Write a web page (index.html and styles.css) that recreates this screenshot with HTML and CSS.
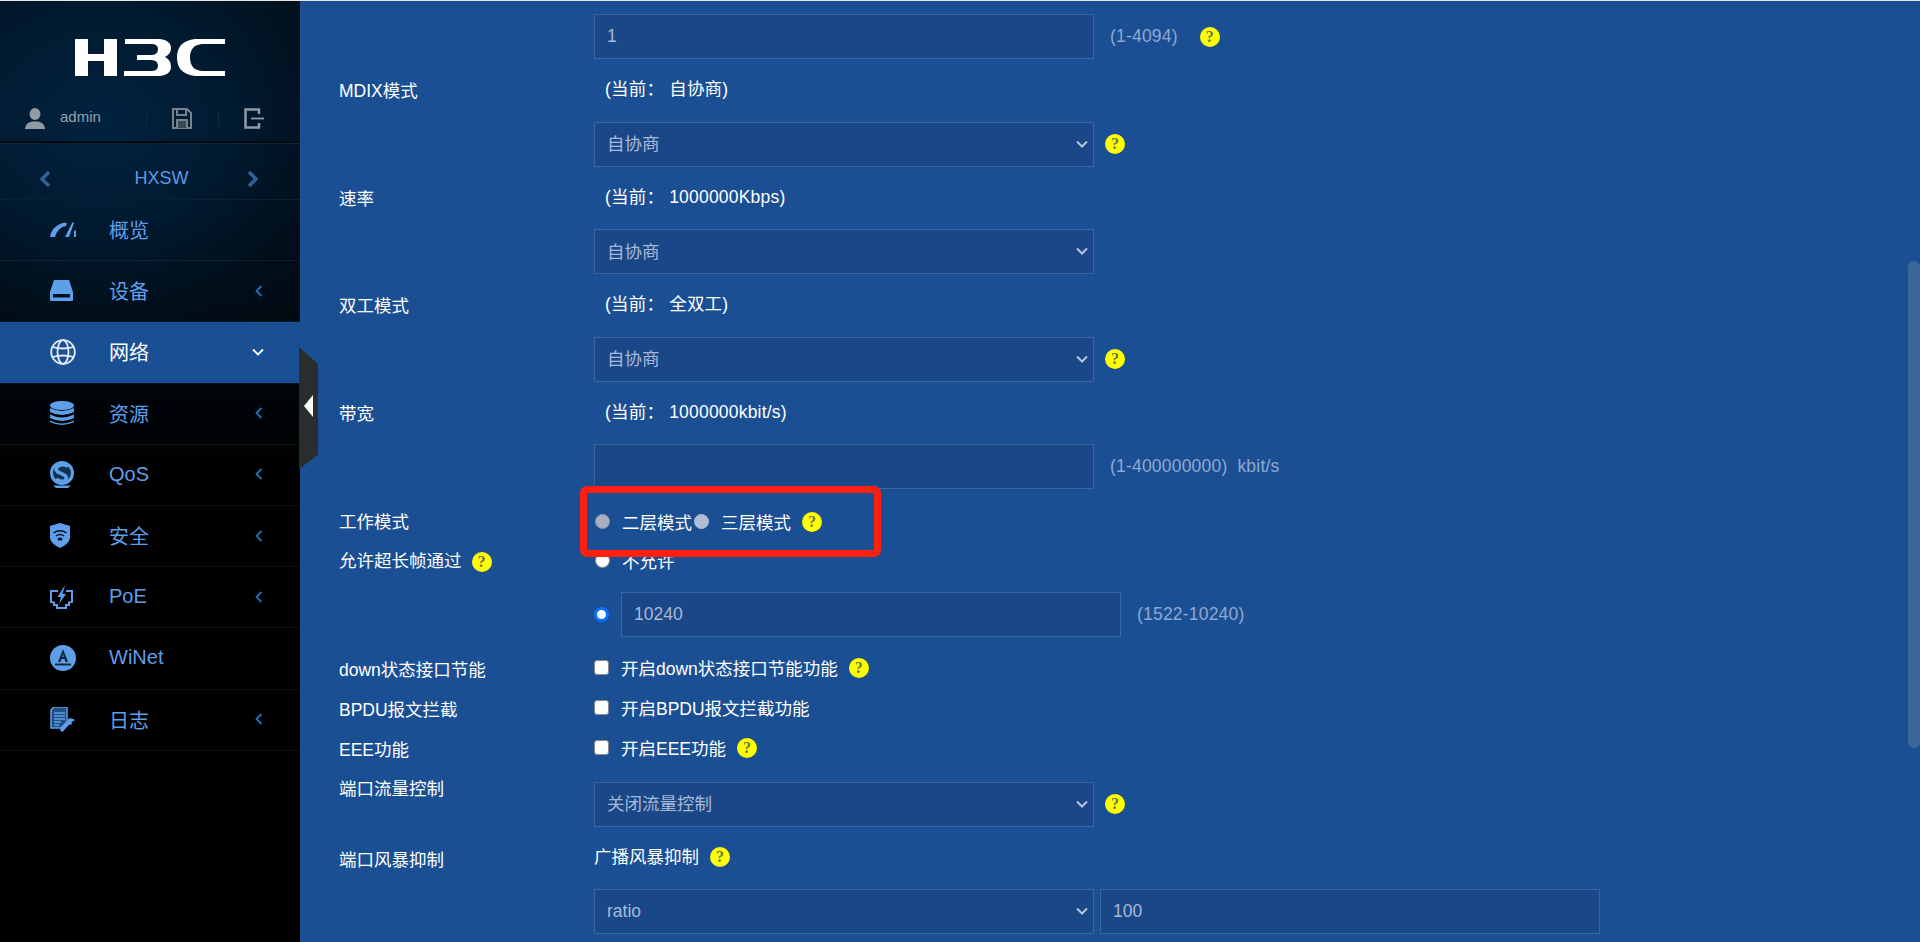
FILE: index.html
```html
<!DOCTYPE html>
<html lang="zh-CN">
<head>
<meta charset="utf-8">
<title>H3C</title>
<link rel="stylesheet" href="styles.css">
</head>
<body>
<div class="topline"></div>
<div class="shell">
  <aside class="sidebar">
    <div class="logo-wrap">
      <svg class="logo" width="150" height="37" viewBox="0 0 150 37" fill="#fff">
        <path d="M0 0H13V15H29V0H42V37H29V22H13V37H0Z"/>
        <path d="M50 0H84Q96 1 96 9.500Q96 15 90 18Q96 21 96 27.500Q96 36 84 37H49V32H76Q83 32 83 27Q83 21 76 21H62V16H76Q83 16 83 10Q83 5 76 5H50Z"/>
        <path d="M150 0H120Q102 2 102 18.500Q102 35 120 37H150V32H127Q115 31 115 18.500Q115 6 127 5H150Z"/>
      </svg>
    </div>
    <div class="userbar">
      <svg class="ub-user" width="20" height="21" viewBox="0 0 20 21" fill="#8f9ba3"><ellipse cx="10" cy="6" rx="5.500" ry="6"/><path d="M0 21Q0 15 7 13.500H13Q20 15 20 21Z"/></svg>
      <span class="ub-name">admin</span>
      <i class="ub-sep"></i>
      <svg class="ub-save" width="20" height="21" viewBox="0 0 20 21" fill="none" stroke="#75838c" stroke-width="2"><path d="M1 1H15L19 5V20H1Z"/><path d="M5 1V7H14V1" /><path d="M5 20V12H15V20" fill="#3a4a55"/></svg>
      <i class="ub-sep"></i>
      <svg class="ub-exit" width="20" height="21" viewBox="0 0 20 21" fill="none" stroke="#8f9ba3" stroke-width="2.500"><path d="M15 6V1.500H1.500V19.500H15V15"/><path d="M7 10.500H20" stroke-width="1.800"/></svg>
    </div>
    <div class="devicebar">
      <svg width="12" height="18" viewBox="0 0 12 18" fill="none" stroke="#2f6199" stroke-width="3.500"><path d="M10 2L3 9L10 16"/></svg>
      <span class="device-name">HXSW</span>
      <svg width="12" height="18" viewBox="0 0 12 18" fill="none" stroke="#2f6199" stroke-width="3.500"><path d="M2 2L9 9L2 16"/></svg>
    </div>
    <ul class="menu">
      <li class="item">
        <span class="ico"><svg width="26" height="17" viewBox="0 0 26 17" fill="#5e9fea"><path d="M0 16Q1 7 10 3Q14 1 17 2L16 5Q8 6 5 16Z"/><path d="M15 16L22.500 1L24 2L19 16Z"/><path d="M24 10L26 9V16H24Z"/></svg></span>
        <span class="label">概览</span>
      </li>
      <li class="item">
        <span class="ico"><svg width="23" height="21" viewBox="0 0 23 21" fill="#5e9fea"><path d="M4 0H19L23 12V20Q23 21 22 21H1Q0 21 0 20V12Z"/><rect x="3" y="14" width="17" height="3.500" fill="#01111f"/></svg></span>
        <span class="label">设备</span>
        <svg class="chev" width="8" height="12" viewBox="0 0 8 12" fill="none" stroke="#1f72bd" stroke-width="1.800"><path d="M6.500 1L1.500 6L6.500 11"/></svg>
      </li>
      <li class="item active">
        <span class="ico"><svg width="26" height="26" viewBox="0 0 26 26" fill="none" stroke="#e6edf6" stroke-width="1.800"><circle cx="13" cy="13" r="11.800"/><ellipse cx="13" cy="13" rx="5.500" ry="11.800"/><path d="M2.500 8Q13 11 23.500 8M2.500 18Q13 15 23.500 18"/></svg></span>
        <span class="label">网络</span>
        <svg class="chev down" width="12" height="8" viewBox="0 0 12 8" fill="none" stroke="#fff" stroke-width="1.800"><path d="M1 1.500L6 6.500L11 1.500"/></svg>
      </li>
      <li class="item">
        <span class="ico"><svg width="24" height="25" viewBox="0 0 24 25" fill="#5e9fea"><ellipse cx="12" cy="4.500" rx="12" ry="4.500"/><path d="M0 7Q12 13 24 7V11Q12 17 0 11Z"/><path d="M0 13.500Q12 19.500 24 13.500V17Q12 23 0 17Z"/><path d="M0 19.500Q12 25.500 24 19.500V21Q12 27 0 21Z"/></svg></span>
        <span class="label">资源</span>
        <svg class="chev" width="8" height="12" viewBox="0 0 8 12" fill="none" stroke="#1f72bd" stroke-width="1.800"><path d="M6.500 1L1.500 6L6.500 11"/></svg>
      </li>
      <li class="item">
        <span class="ico"><svg width="24" height="27" viewBox="0 0 24 27"><circle cx="12" cy="12" r="10.500" fill="#12304f" stroke="#5e9fea" stroke-width="3"/><path d="M18 5Q11 2 7 6Q4.500 10 10 12L15 14.500Q18 17 14.500 20Q9 21 6 18" fill="none" stroke="#5e9fea" stroke-width="3.600"/><path d="M3 24.500H21L18 27H6Z" fill="#5e9fea"/></svg></span>
        <span class="label">QoS</span>
        <svg class="chev" width="8" height="12" viewBox="0 0 8 12" fill="none" stroke="#1f72bd" stroke-width="1.800"><path d="M6.500 1L1.500 6L6.500 11"/></svg>
      </li>
      <li class="item">
        <span class="ico"><svg width="20" height="25" viewBox="0 0 20 25"><path d="M10 0L20 3V15Q19 21 10 25Q1 21 0 15V3Z" fill="#5e9fea"/><g fill="none" stroke="#02101c" stroke-width="1.500"><path d="M3.500 10Q10 5.500 16.500 10"/><path d="M6 13Q10 10 14 13"/></g><ellipse cx="10" cy="16" rx="2.500" ry="1.500" fill="#02101c"/></svg></span>
        <span class="label">安全</span>
        <svg class="chev" width="8" height="12" viewBox="0 0 8 12" fill="none" stroke="#1f72bd" stroke-width="1.800"><path d="M6.500 1L1.500 6L6.500 11"/></svg>
      </li>
      <li class="item">
        <span class="ico"><svg width="23" height="24" viewBox="0 0 23 24"><path d="M8 6H1V17L4 17.500V20H7V23H16V20H19V17.500L22 17V6H16" fill="none" stroke="#5e9fea" stroke-width="2"/><path d="M15 0L7.500 12H11L9 19L16 9H12.500Z" fill="#5e9fea"/></svg></span>
        <span class="label">PoE</span>
        <svg class="chev" width="8" height="12" viewBox="0 0 8 12" fill="none" stroke="#1f72bd" stroke-width="1.800"><path d="M6.500 1L1.500 6L6.500 11"/></svg>
      </li>
      <li class="item">
        <span class="ico"><svg width="26" height="26" viewBox="0 0 26 26"><circle cx="13" cy="13" r="13" fill="#5e9fea"/><path d="M13 4L8 17H10.500L11.500 14H14.500L15.500 17H18ZM12.200 12L13 9L13.800 12Z" fill="#12263c" fill-rule="evenodd"/><rect x="5" y="18.500" width="16" height="2" fill="#12263c"/></svg></span>
        <span class="label">WiNet</span>
      </li>
      <li class="item">
        <span class="ico"><svg width="25" height="25" viewBox="0 0 25 25"><path d="M4 0H17V15L11 21H1V3Z" fill="#24507f" stroke="#5e9fea" stroke-width="1.500"/><g stroke="#5e9fea" stroke-width="1.500"><path d="M4 6H15M4 9H15M4 12H15M4 15H11M4 18H9"/></g><path d="M11 24L19 15" stroke="#5e9fea" stroke-width="3.500"/><path d="M18 12Q21 10 25 13L21.500 15L22 17L20 18L17.500 16Z" fill="#5e9fea"/></svg></span>
        <span class="label">日志</span>
        <svg class="chev" width="8" height="12" viewBox="0 0 8 12" fill="none" stroke="#1f72bd" stroke-width="1.800"><path d="M6.500 1L1.500 6L6.500 11"/></svg>
      </li>
    </ul>
  </aside>

  <div class="collapse">
    <svg width="20" height="122" viewBox="0 0 20 122"><path d="M0 0L19 17V108L0 122Z" fill="#2a2d2e"/><path d="M14 48V70L5 59Z" fill="#fff"/></svg>
  </div>

  <main class="main">
    <div class="row first">
      <div class="col-label"></div>
      <div class="col-ctrl line-field">
        <input class="field" type="text" value="1">
        <span class="range">(1-4094)</span>
        <span class="help wide">?</span>
      </div>
    </div>

    <div class="row"><div class="col-label">MDIX模式</div><div class="col-ctrl current">(当前：&nbsp;自协商)</div></div>
    <div class="row tight"><div class="col-label"></div><div class="col-ctrl line-field">
      <span class="selwrap"><select class="field"><option>自协商</option></select><svg class="arrow" width="12" height="8" viewBox="0 0 12 8" fill="none" stroke="#b6c4dc" stroke-width="2"><path d="M1 1.500L6 6.500L11 1.500"/></svg></span>
      <span class="help">?</span>
    </div></div>

    <div class="row"><div class="col-label">速率</div><div class="col-ctrl current">(当前：&nbsp;1000000Kbps)</div></div>
    <div class="row tight"><div class="col-label"></div><div class="col-ctrl line-field">
      <span class="selwrap"><select class="field"><option>自协商</option></select><svg class="arrow" width="12" height="8" viewBox="0 0 12 8" fill="none" stroke="#b6c4dc" stroke-width="2"><path d="M1 1.500L6 6.500L11 1.500"/></svg></span>
    </div></div>

    <div class="row"><div class="col-label">双工模式</div><div class="col-ctrl current">(当前：&nbsp;全双工)</div></div>
    <div class="row tight"><div class="col-label"></div><div class="col-ctrl line-field">
      <span class="selwrap"><select class="field"><option>自协商</option></select><svg class="arrow" width="12" height="8" viewBox="0 0 12 8" fill="none" stroke="#b6c4dc" stroke-width="2"><path d="M1 1.500L6 6.500L11 1.500"/></svg></span>
      <span class="help">?</span>
    </div></div>

    <div class="row"><div class="col-label">带宽</div><div class="col-ctrl current">(当前：&nbsp;1000000kbit/s)</div></div>
    <div class="row tight"><div class="col-label"></div><div class="col-ctrl line-field">
      <input class="field" type="text">
      <span class="range">(1-400000000)</span><span class="range unit">kbit/s</span>
    </div></div>

    <div class="row mode">
      <div class="col-label">工作模式</div>
      <div class="col-ctrl choices">
        <label class="choice"><input class="rd rd-off" type="radio" disabled>二层模式</label>
        <label class="choice"><input class="rd rd-off2" type="radio" disabled>三层模式</label>
        <span class="help">?</span>
      </div>
    </div>

    <div class="row jumbo">
      <div class="col-label with-help">允许超长帧通过<span class="help">?</span></div>
      <div class="col-ctrl choices"><label class="choice"><input class="rd" type="radio">不允许</label></div>
    </div>
    <div class="row jumbo-input"><div class="col-label"></div><div class="col-ctrl line-field">
      <input class="rd rd-on" type="radio" checked>
      <input class="field" type="text" value="10240">
      <span class="range">(1522-10240)</span>
    </div></div>

    <div class="row chk c1"><div class="col-label">down状态接口节能</div><div class="col-ctrl choices"><label class="choice"><input class="cb" type="checkbox">开启down状态接口节能功能</label><span class="help">?</span></div></div>
    <div class="row chk c2"><div class="col-label">BPDU报文拦截</div><div class="col-ctrl choices"><label class="choice"><input class="cb" type="checkbox">开启BPDU报文拦截功能</label></div></div>
    <div class="row chk c3"><div class="col-label">EEE功能</div><div class="col-ctrl choices"><label class="choice"><input class="cb" type="checkbox">开启EEE功能</label><span class="help">?</span></div></div>

    <div class="row flow"><div class="col-label">端口流量控制</div><div class="col-ctrl line-field flow-ctrl">
      <span class="selwrap"><select class="field"><option>关闭流量控制</option></select><svg class="arrow" width="12" height="8" viewBox="0 0 12 8" fill="none" stroke="#b6c4dc" stroke-width="2"><path d="M1 1.500L6 6.500L11 1.500"/></svg></span>
      <span class="help">?</span>
    </div></div>

    <div class="row storm"><div class="col-label">端口风暴抑制</div><div class="col-ctrl storm-title">广播风暴抑制<span class="help">?</span></div></div>
    <div class="row storm-fields"><div class="col-label"></div><div class="col-ctrl line-field pair">
      <span class="selwrap"><select class="field"><option>ratio</option></select><svg class="arrow" width="12" height="8" viewBox="0 0 12 8" fill="none" stroke="#b6c4dc" stroke-width="2"><path d="M1 1.500L6 6.500L11 1.500"/></svg></span>
      <input class="field" type="text" value="100">
    </div></div>

    <div class="annot"></div>
    <div class="thumb"></div>
  </main>
</div>
</body>
</html>
```

FILE: styles.css
```css
* { box-sizing: border-box; }
html, body { margin: 0; height: 100%; overflow: hidden; }
body {
  font-family: "Liberation Sans", "Noto Sans CJK SC", sans-serif;
  font-size: 17.5px;
  color: #fff;
  background: #1b4f93;
}
.topline { height: 1px; background: #e4e7ea; }
.shell { display: flex; height: 941px; position: relative; }

/* sidebar */
.sidebar {
  width: 300px;
  flex: none;
  background:
    radial-gradient(ellipse 320px 270px at 100px 120px, #01233f 0%, #011a30 40%, rgba(1,18,32,.5) 72%, rgba(0,0,0,0) 100%),
    linear-gradient(#01111d 0, #010a12 300px, #000 480px);
}
.logo-wrap { padding: 38px 0 0 75px; height: 100px; }
.logo { display: block; }
.userbar {
  display: flex;
  align-items: flex-start;
  height: 42px;
  padding: 7px 0 0 25px;
  border-bottom: 2px solid #020a12;
}
.ub-name { font-size: 15px; color: #94a3ad; margin-left: 15px; width: 86px; line-height: 18px; }
.ub-sep { width: 1px; height: 16px; background: #16293a; margin-top: 2px; }
.ub-save { margin: 0 26px 0 25px; }
.ub-exit { margin-left: 25px; }
.devicebar {
  display: flex;
  align-items: center;
  height: 57px;
  padding: 14px 41px 0 39px;
  border-top: 1px solid #0e2436;
  border-bottom: 1px solid #0b2030;
}
.device-name { flex: 1; text-align: center; padding-left: 25px; font-size: 18px; color: #5a9be4; }
.menu { list-style: none; margin: 0; padding: 0; }
.item {
  display: flex;
  align-items: center;
  height: 61.2px;
  padding: 0 0 1px 50px;
  color: #5e9fea;
  font-size: 20px;
  border-bottom: 1px solid rgba(255,255,255,.055);
  position: relative;
}
.item.active { background: #1b4f93; color: #fff; border-bottom-color: #02121f; }
.ico { width: 59px; flex: none; display: flex; align-items: center; }
.ico svg { display: block; }
.label { flex: 1; }
.chev { margin-right: 37px; }
.chev.down { margin-right: 36px; }

.collapse { position: absolute; left: 299px; top: 346px; width: 20px; height: 122px; z-index: 3; }
.collapse svg { display: block; }

/* main form */
.main {
  flex: 1;
  position: relative;
  padding-left: 39px;
  min-width: 0;
  overflow: hidden;
}
.row { display: grid; grid-template-columns: 255px 1fr; margin-top: 18px; }
.row.first { margin-top: 13px; }
.row.tight { margin-top: 20.5px; }
.col-label { line-height: 24px; height: 24px; padding-top: 2px; white-space: nowrap; }
.col-ctrl { min-width: 0; }
.current { line-height: 24px; padding-left: 11px; white-space: pre; letter-spacing: .2px; }
.line-field { display: flex; align-items: center; height: 45px; }
.field {
  width: 500px;
  height: 45px;
  flex: none;
  background: #1a4787;
  border: 1px solid #3b659f;
  color: #a9b9d8;
  font: inherit;
  padding: 0 12px;
  outline: 0;
  border-radius: 0;
  appearance: none;
}
.selwrap { position: relative; display: block; width: 500px; height: 45px; flex: none; }
.selwrap .field { display: block; }
.arrow { position: absolute; right: 6px; top: 18px; pointer-events: none; }
.range { margin-left: 16px; color: #8fa8d0; white-space: nowrap; letter-spacing: .2px; }
.range.unit { margin-left: 10px; }
.help {
  display: inline-block;
  width: 20px;
  height: 20px;
  border-radius: 50%;
  background: #ffff00;
  color: #68754f;
  font: bold 16px/20px "Liberation Serif", serif;
  text-align: center;
  margin-left: 11px;
  flex: none;
}
.help.wide { margin-left: 22px; }

.choices { display: flex; align-items: center; height: 24px; }
.choice { display: flex; align-items: center; white-space: nowrap; }
.rd, .cb {
  appearance: none;
  width: 15px;
  height: 15px;
  margin: 0 12px 0 1px;
  flex: none;
  background: #fff;
  border: 1px solid #8b8b8b;
}
.rd { border-radius: 50%; }
.cb { margin-left: 0; border-radius: 3px; }
.rd-off { background: #a7aebf; border-color: #9098ab; }
.rd-off2 { background: #b1bdd5; border-color: #b1bdd5; margin-left: 2px; }
.rd-on { border: 3px solid #0b6ffd; margin: 0 12px 0 0; }

.mode { margin-top: 20.5px; }
.mode .col-label, .jumbo .col-label { padding-top: 0; }
.jumbo { margin-top: 15px; }
.with-help { display: flex; align-items: center; }
.with-help .help { margin-left: 10px; margin-top: 3px; }
.jumbo-input { margin-top: 19px; }
.chk.c1 { margin-top: 19px; }
.chk.c2, .chk.c3 { margin-top: 16px; }
.flow { margin-top: 17px; }
.flow .col-label { padding-top: 0; }
.flow-ctrl { height: 50px; padding-top: 5px; }
.storm { margin-top: 18px; }
.storm .col-label { padding-top: 3px; }
.storm-title { display: flex; align-items: center; line-height: 24px; }
.storm-fields { margin-top: 20px; }
.pair { gap: 6px; }

.annot {
  position: absolute;
  left: 280px;
  top: 485px;
  width: 301px;
  height: 71px;
  border: 7px solid #ff1f10;
  border-radius: 7px;
  pointer-events: none;
}
.thumb {
  position: absolute;
  right: 0;
  top: 260px;
  width: 12px;
  height: 487px;
  background: #3b6699;
  border-radius: 6px;
}
```
